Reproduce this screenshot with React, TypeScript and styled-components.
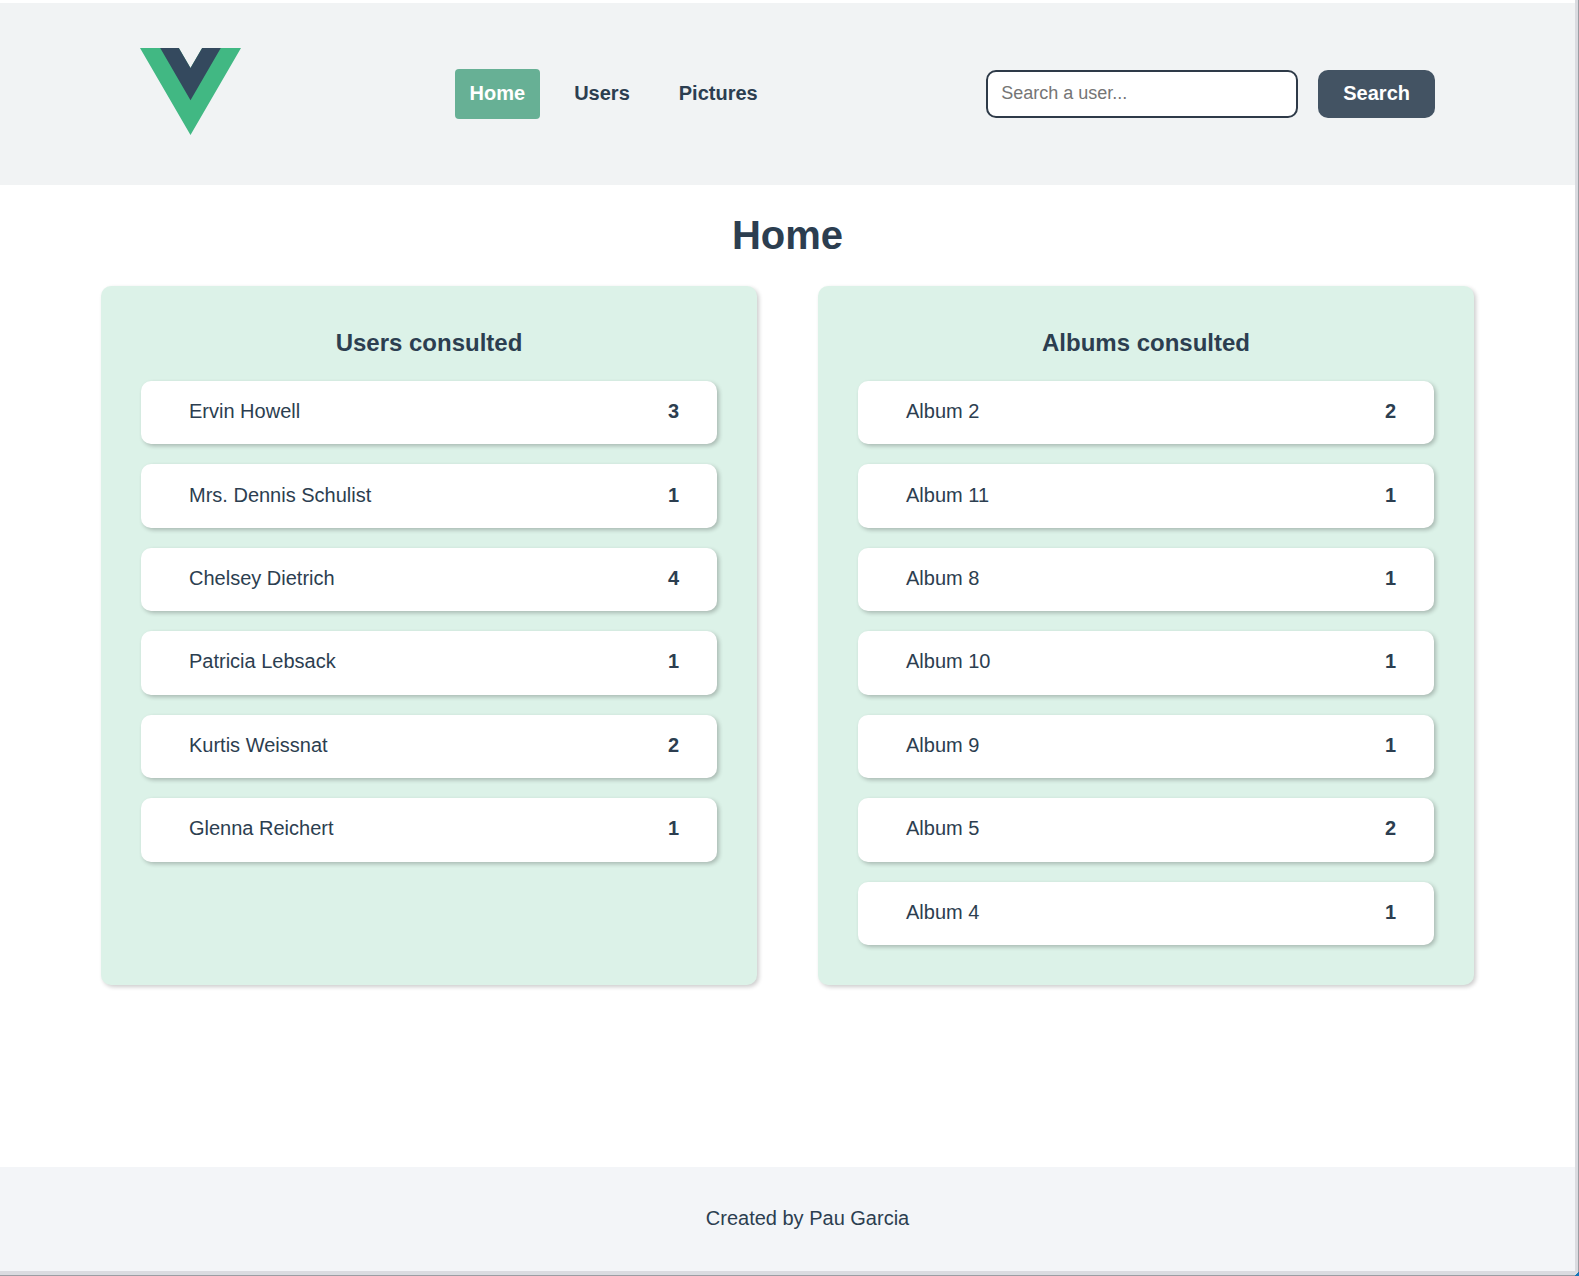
import React from 'react';
import styled, { createGlobalStyle } from 'styled-components';

const ink = '#2c3e50';

const GlobalStyle = createGlobalStyle`
  *, *::before, *::after { box-sizing: border-box; }
  body {
    margin: 0;
    background: #fff;
    color: ${ink};
    font-family: "Liberation Sans", Arial, Helvetica, sans-serif;
    font-size: 20px;
  }
`;

const Frame = styled.div`
  position: relative;
  border-right: 1px solid #9b9da3;
  border-bottom: 1px solid #9b9da3;
`;

const Page = styled.div`
  display: flex;
  flex-direction: column;
  min-height: calc(100vh - 1px);
  padding-top: 3px;
  border-right: 3px solid #dadbe0;
  border-bottom: 4px solid #dadbe0;
`;

const Corner = styled.span`
  position: absolute;
  right: -1px;
  bottom: -1px;
  width: 4px;
  height: 4px;
  background: linear-gradient(135deg, transparent 40%, #1676b8 40%);
`;

const Header = styled.header`
  display: flex;
  align-items: center;
  justify-content: space-between;
  min-height: 182px;
  padding: 0 140px;
  background: #f1f3f4;
`;

const LogoLink = styled.a`
  display: block;
  padding-bottom: 6px;

  svg { display: block; width: 101px; height: 87px; }
`;

const Nav = styled.nav`
  display: flex;
  gap: 19px;
`;

const NavLink = styled.a<{ $active?: boolean }>`
  padding: 0 15px 2px;
  border-radius: 4px;
  background: ${p => (p.$active ? '#67b095' : 'transparent')};
  color: ${p => (p.$active ? '#fff' : ink)};
  font-weight: 700;
  line-height: 48px;
  text-decoration: none;
`;

const SearchForm = styled.form`
  display: flex;
  gap: 20px;
`;

const SearchInput = styled.input`
  width: 312px;
  height: 48px;
  padding: 0 13px 2px;
  border: 2px solid #2e3a48;
  border-radius: 10px;
  background: #fff;
  color: ${ink};
  font: inherit;
  font-size: 18px;

  &::placeholder { color: #757575; opacity: 1; }
`;

const SearchButton = styled.button`
  height: 48px;
  padding: 0 25px 2px;
  border: 0;
  border-radius: 10px;
  background: #435363;
  color: #fff;
  font: inherit;
  font-weight: 700;
`;

const Main = styled.main`
  flex: 1;
  padding: 0 101px;
`;

const Title = styled.h1`
  margin: 0;
  padding: 26px 0 27px;
  font-size: 40px;
  line-height: 48px;
  text-align: center;
`;

const Panels = styled.div`
  display: grid;
  grid-template-columns: 1fr 1fr;
  gap: 61px;
`;

const Panel = styled.section`
  display: flex;
  flex-direction: column;
  min-height: 699px;
  padding: 40px;
  border-radius: 10px;
  background: #dcf2e8;
  box-shadow: 2px 2px 4px rgba(0, 0, 0, 0.2);
`;

const PanelTitle = styled.h2`
  margin: 0 0 21px;
  font-size: 24px;
  line-height: 34px;
  text-align: center;
`;

const List = styled.ul`
  display: grid;
  flex: 1;
  grid-template-rows: repeat(7, 1fr);
  gap: 20px;
  margin: 0;
  padding: 0;
  list-style: none;
`;

const Item = styled.li`
  display: flex;
  align-items: center;
  justify-content: space-between;
  padding: 0 38px 2px 48px;
  border-radius: 10px;
  background: #fff;
  box-shadow: 2px 2px 4px rgba(0, 0, 0, 0.24);
`;

const Footer = styled.footer`
  padding: 40px 0 41px 40px;
  background: #f3f5f8;
  line-height: 23px;
  text-align: center;
`;

type Entry = [name: string, count: number];

const users: Entry[] = [
  ['Ervin Howell', 3],
  ['Mrs. Dennis Schulist', 1],
  ['Chelsey Dietrich', 4],
  ['Patricia Lebsack', 1],
  ['Kurtis Weissnat', 2],
  ['Glenna Reichert', 1],
];

const albums: Entry[] = [
  ['Album 2', 2],
  ['Album 11', 1],
  ['Album 8', 1],
  ['Album 10', 1],
  ['Album 9', 1],
  ['Album 5', 2],
  ['Album 4', 1],
];

function ConsultedPanel({ title, entries }: { title: string; entries: Entry[] }) {
  return (
    <Panel>
      <PanelTitle>{title}</PanelTitle>
      <List>
        {entries.map(([name, count]) => (
          <Item key={name}>
            <span>{name}</span>
            <strong>{count}</strong>
          </Item>
        ))}
      </List>
    </Panel>
  );
}

export default function App() {
  return (
    <Frame>
      <GlobalStyle />
      <Page>
        <Header>
          <LogoLink href="#" aria-label="Vue">
            <svg viewBox="0 0 261.76 226.69" preserveAspectRatio="none" aria-hidden="true">
              <path fill="#41b883" d="M161.096 0 130.871 52.352 100.647 0H0l130.877 226.688L261.749 0z" />
              <path fill="#34495e" d="M161.096 0 130.871 52.352 100.647 0H52.346l78.526 136.01L209.398 0z" />
            </svg>
          </LogoLink>
          <Nav>
            <NavLink href="#home" $active aria-current="page">Home</NavLink>
            <NavLink href="#users">Users</NavLink>
            <NavLink href="#pictures">Pictures</NavLink>
          </Nav>
          <SearchForm role="search" onSubmit={e => e.preventDefault()}>
            <SearchInput type="text" placeholder="Search a user..." aria-label="Search a user" />
            <SearchButton type="submit">Search</SearchButton>
          </SearchForm>
        </Header>
        <Main>
          <Title>Home</Title>
          <Panels>
            <ConsultedPanel title="Users consulted" entries={users} />
            <ConsultedPanel title="Albums consulted" entries={albums} />
          </Panels>
        </Main>
        <Footer>Created by Pau Garcia</Footer>
      </Page>
      <Corner />
    </Frame>
  );
}
